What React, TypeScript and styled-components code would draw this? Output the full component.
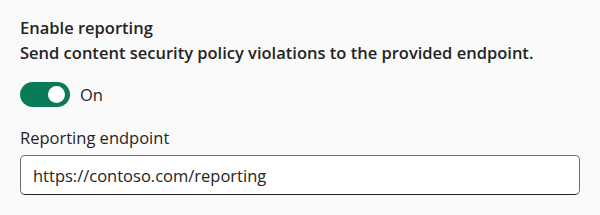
import React, { useState } from 'react';
import styled, { createGlobalStyle } from 'styled-components';

const GlobalStyle = createGlobalStyle`
  html, body {
    margin: 0;
    padding: 0;
    background: #fafafa;
  }
  body {
    font-family: "Segoe UI", "Open Sans", "Noto Sans", sans-serif;
    color: #242424;
  }
`;

const Panel = styled.div`
  display: flex;
  flex-direction: column;
  padding: 15px 20px;
  width: 560px;
`;

const Heading = styled.div`
  display: flex;
  flex-direction: column;
  font-size: 16.5px;
  line-height: 25px;
  font-weight: 600;
`;

const SwitchRow = styled.label`
  display: flex;
  align-items: center;
  gap: 10px;
  margin-top: 17px;
  height: 25px;
  font-size: 16.5px;
  cursor: pointer;
`;

const Track = styled.span<{ $on: boolean }>`
  display: flex;
  align-items: center;
  justify-content: ${(p) => (p.$on ? 'flex-end' : 'flex-start')};
  box-sizing: border-box;
  width: 50px;
  height: 25px;
  padding: 0 4px;
  border-radius: 13px;
  background: ${(p) => (p.$on ? '#0a7a59' : 'transparent')};
  border: 1px solid ${(p) => (p.$on ? 'transparent' : '#616161')};
`;

const Thumb = styled.span<{ $on: boolean }>`
  width: 17px;
  height: 17px;
  border-radius: 50%;
  background: ${(p) => (p.$on ? '#ffffff' : '#616161')};
`;

const HiddenCheck = styled.input`
  position: absolute;
  opacity: 0;
  width: 0;
  height: 0;
`;

const Field = styled.div`
  display: flex;
  flex-direction: column;
  gap: 5px;
  margin-top: 18px;
`;

const FieldLabel = styled.label`
  font-size: 16.5px;
  line-height: 25px;
`;

const TextInput = styled.input`
  box-sizing: border-box;
  width: 100%;
  height: 40px;
  padding: 0 12px;
  border: 1px solid #6e6e6e;
  border-bottom-color: #242424;
  border-radius: 5px;
  background: #ffffff;
  font-family: inherit;
  font-size: 16.5px;
  color: #242424;
  outline: none;
`;

export default function App() {
  const [on, setOn] = useState(true);
  const [endpoint, setEndpoint] = useState('https://contoso.com/reporting');

  return (
    <>
      <GlobalStyle />
      <Panel>
        <Heading>
          <span>Enable reporting</span>
          <span>Send content security policy violations to the provided endpoint.</span>
        </Heading>
        <SwitchRow>
          <HiddenCheck type="checkbox" checked={on} onChange={() => setOn(!on)} />
          <Track $on={on}>
            <Thumb $on={on} />
          </Track>
          <span>{on ? 'On' : 'Off'}</span>
        </SwitchRow>
        <Field>
          <FieldLabel htmlFor="endpoint">Reporting endpoint</FieldLabel>
          <TextInput
            id="endpoint"
            value={endpoint}
            onChange={(e) => setEndpoint(e.target.value)}
          />
        </Field>
      </Panel>
    </>
  );
}
